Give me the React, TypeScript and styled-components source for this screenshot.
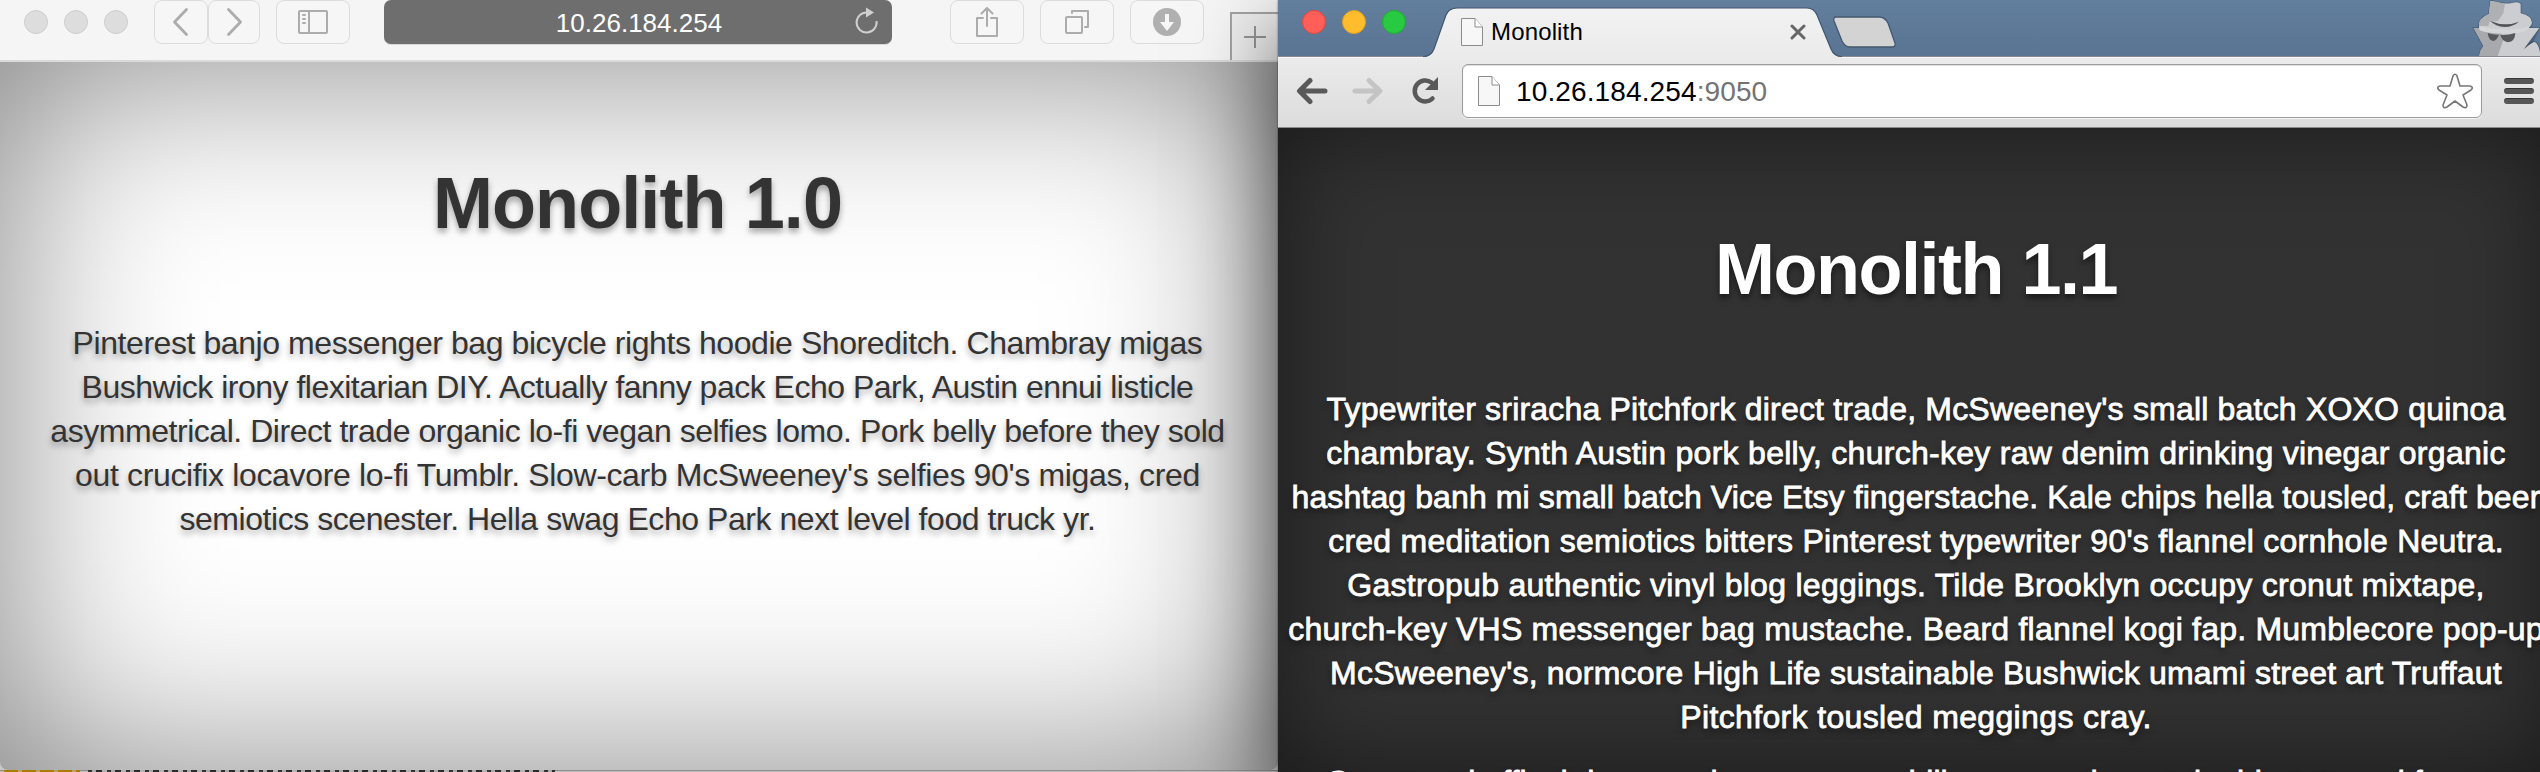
import React from "react";
import styled, { createGlobalStyle } from "styled-components";

const GlobalStyle = createGlobalStyle`
  * { box-sizing: border-box; }
  html, body { margin: 0; height: 772px; overflow: hidden; }
  body { font-family: "Liberation Sans", Arial, sans-serif; background: #c8c8c8; }
  svg { display: block; flex: none; }
`;

const Desktop = styled.main`
  display: flex;
  width: 2540px;
  height: 772px;
  overflow: hidden;
`;

const LeftSide = styled.div`
  display: flex;
  flex-direction: column;
  flex: none;
  width: 1278px;
`;

const SafariWindow = styled.section`
  display: flex;
  flex-direction: column;
  height: 770px;
  border-radius: 0 0 8px 8px;
  overflow: hidden;
`;

const SafariToolbar = styled.header`
  display: flex;
  align-items: flex-start;
  flex: none;
  height: 62px;
  padding-left: 24px;
  background: #f5f5f5;
  border-bottom: 2px solid #dadada;
`;

const Lights = styled.div`
  display: flex;
  gap: 16px;
  margin: 10px 26px 0 0;
`;

const Light = styled.i<{ $fill: string; $edge: string }>`
  width: 24px;
  height: 24px;
  border-radius: 50%;
  background: ${(p) => p.$fill};
  border: 1px solid ${(p) => p.$edge};
`;

const ToolButton = styled.button<{ $width?: number; $gap?: number }>`
  display: flex;
  align-items: center;
  justify-content: center;
  flex: none;
  width: ${(p) => p.$width ?? 74}px;
  height: 44px;
  margin: 0 ${(p) => p.$gap ?? 16}px 0 0;
  padding: 0;
  border: 1.5px solid #dcdcdc;
  border-radius: 8px;
  background: #f6f6f6;
`;

const SafariAddress = styled.div`
  display: flex;
  align-items: center;
  justify-content: center;
  position: relative;
  flex: none;
  width: 508px;
  height: 44px;
  margin-right: 58px;
  border-radius: 7px;
  background: #6e6e6e;
  box-shadow: 0 1px 0 #d8d8d8;
  color: #fff;
  font-size: 26px;
  line-height: 44px;
  padding: 2px 0 0 2px;
`;

const ReloadSlot = styled.span`
  position: absolute;
  right: 12px;
  top: 6px;
`;

const NewTabBox = styled.button`
  display: flex;
  align-items: center;
  justify-content: center;
  width: 48px;
  height: 48px;
  margin: 12px 0 0 10px;
  padding: 0;
  border: solid #a3a3a3;
  border-width: 2px 0 0 2px;
  background: #eeeeee;
`;

const Page = styled.article<{ $dark?: boolean }>`
  flex: 1;
  display: flex;
  flex-direction: column;
  align-items: center;
  padding: 101px ${(p) => (p.$dark ? 0 : 3)}px 0 0;
  overflow: hidden;
  color: ${(p) => (p.$dark ? "#fff" : "#333")};
  background: ${(p) => (p.$dark ? "#323232" : "#fff")};
  box-shadow: inset 0 0 ${(p) => (p.$dark ? 100 : 200)}px rgba(0, 0, 0, 0.5);
  text-shadow: 0 4px 6px rgba(0, 0, 0, ${(p) => (p.$dark ? 0.5 : 0.35)});
`;

const Title = styled.h1<{ $tracking: number }>`
  margin: 0 0 78px;
  font-size: 72px;
  line-height: 80px;
  letter-spacing: ${(p) => p.$tracking}px;
`;

const Paragraph = styled.p<{ $heavy?: boolean }>`
  display: flex;
  flex-direction: column;
  align-items: center;
  margin: 0 0 21px;
  font-size: 32px;
  line-height: 44px;
  -webkit-text-stroke: ${(p) => (p.$heavy ? "0.8px #fff" : "0")};
`;

const Line = styled.span<{ $tracking: number }>`
  white-space: nowrap;
  letter-spacing: ${(p) => p.$tracking}px;
`;

const PeekStrip = styled.div`
  display: flex;
  height: 2px;
  padding-left: 4px;
  gap: 8px;
  background: linear-gradient(#8f8f8f 50%, #bdbdbd 50%);
`;

const PeekMark = styled.i`
  width: 76px;
  background: repeating-linear-gradient(90deg, #a87d00 0 14px, #b5a36c 14px 18px);
`;

const PeekText = styled.i`
  width: 467px;
  background: repeating-linear-gradient(90deg, #333 0 4px, #a9a9a9 4px 8px, #2b2b2b 8px 14px, #b2b2b2 14px 19px);
`;

const ChromeWindow = styled.section`
  display: flex;
  flex-direction: column;
  position: relative;
  flex: none;
  width: 1276px;
  box-shadow: 0 0 2px rgba(0, 0, 0, 0.5), 0 30px 80px rgba(0, 0, 0, 0.6);
`;

const TabStrip = styled.div`
  display: flex;
  align-items: flex-start;
  flex: none;
  height: 56px;
  padding-left: 24px;
  background: linear-gradient(#637f9e, #5a7493);
`;

const Tab = styled.div`
  display: flex;
  align-items: flex-start;
  position: relative;
  z-index: 1;
  flex: none;
  width: 420px;
  height: 52px;
  margin: 6px 0 0 -9px;
  padding: 12px 38px 0 38px;
`;

const TabShape = styled.svg`
  position: absolute;
  inset: 0;
  z-index: -1;
`;

const TabName = styled.span`
  flex: 1;
  margin-left: 8px;
  font-size: 24px;
  line-height: 28px;
  letter-spacing: 0.15px;
  color: #000;
`;

const CloseMark = styled.svg`
  margin: 6px -1px 0 0;
`;

const NewTabShape = styled.svg`
  margin: 15px 0 0 -12px;
`;

const Incognito = styled.svg`
  margin: 0 14px 0 auto;
`;

const ChromeToolbar = styled.header`
  display: flex;
  align-items: flex-start;
  flex: none;
  height: 72px;
  padding: 7px 0 0 18px;
  border-top: 1px solid #8a8a92;
  border-bottom: 1px solid #8b8b8b;
  background: linear-gradient(#ebebeb, #dcdcdc);
  box-shadow: inset 0 1px 0 #f8f8f8;
`;

const NavIcon = styled.span<{ $gap: number }>`
  margin: 12px ${(p) => p.$gap}px 0 0;
`;

const Omnibox = styled.div`
  display: flex;
  align-items: flex-start;
  flex: none;
  width: 1020px;
  height: 54px;
  padding: 11px 8px 0 15px;
  border: 1px solid #9b9b9b;
  border-radius: 6px;
  background: #fff;
  box-shadow: inset 0 1px 1px #dcdcdc, 0 1px 0 #f4f4f4;
`;

const Url = styled.span`
  flex: 1;
  margin: 0 0 0 16px;
  font-size: 28px;
  line-height: 32px;
  letter-spacing: 0.12px;
  color: #000;
`;

const Port = styled.span`
  color: #737373;
`;

const Star = styled.svg`
  margin-top: -3px;
`;

const MenuBars = styled.span`
  display: flex;
  flex-direction: column;
  gap: 4px;
  margin: 14px 0 0 22px;
`;

const MenuBar = styled.i`
  width: 30px;
  height: 6px;
  border-radius: 3px;
  background: #575757;
  border-top: 1px solid #383838;
`;

const stroke = { fill: "none", stroke: "#acacac", strokeLinecap: "round", strokeLinejoin: "round" } as const;

const Chevron = ({ forward }: { forward?: boolean }) => (
  <svg width="18" height="30" viewBox="0 0 18 30" {...stroke} strokeWidth="2.800">
    <path d={forward ? "M3.500 2.500L15.500 15L3.500 27.500" : "M14.500 2.500L2.500 15L14.500 27.500"} />
  </svg>
);

const FileIcon = ({ height }: { height: number }) => (
  <svg width="22" height={height} viewBox={`0 0 22 ${height}`} fill="#f7f7f7" stroke="#8c8c8c">
    <path d={`M.5 .5H14L21.500 9V${height - 0.5}H.5Z`} />
    <path d="M14 .5V9H21.500" fill="#fff" />
  </svg>
);

const Arrow = ({ forward }: { forward?: boolean }) => (
  <svg width="34" height="30" viewBox="0 0 34 30" fill="none" stroke={forward ? "#c4c4c4" : "#595959"} strokeWidth="5" strokeLinecap="round" strokeLinejoin="round">
    <path d={forward ? "M4 15H28M18 4.500L29 15L18 25.500" : "M29 15H5M14 4.500L3.500 15L14 25.500"} />
  </svg>
);

type TextLine = [string, number];

const lightLines: TextLine[] = [
  ["Pinterest banjo messenger bag bicycle rights hoodie Shoreditch. Chambray migas", -0.43],
  ["Bushwick irony flexitarian DIY. Actually fanny pack Echo Park, Austin ennui listicle", -0.5],
  ["asymmetrical. Direct trade organic lo-fi vegan selfies lomo. Pork belly before they sold", -0.46],
  ["out crucifix locavore lo-fi Tumblr. Slow-carb McSweeney's selfies 90's migas, cred", -0.355],
  ["semiotics scenester. Hella swag Echo Park next level food truck yr.", -0.45],
];

const darkLines: TextLine[] = [
  ["Typewriter sriracha Pitchfork direct trade, McSweeney's small batch XOXO quinoa", 0.19],
  ["chambray. Synth Austin pork belly, church-key raw denim drinking vinegar organic", 0.285],
  ["hashtag banh mi small batch Vice Etsy fingerstache. Kale chips hella tousled, craft beer", 0.11],
  ["cred meditation semiotics bitters Pinterest typewriter 90's flannel cornhole Neutra.", 0.245],
  ["Gastropub authentic vinyl blog leggings. Tilde Brooklyn occupy cronut mixtape,", 0.285],
  ["church-key VHS messenger bag mustache. Beard flannel kogi fap. Mumblecore pop-up", 0.22],
  ["McSweeney's, normcore High Life sustainable Bushwick umami street art Truffaut", 0.2],
  ["Pitchfork tousled meggings cray.", 0.36],
];

const nextLines: TextLine[] = [
  ["Street art keffiyeh hammock raw vegan chillwave synth sustainable tattooed forage", 0.05],
];

const Lines = ({ lines }: { lines: TextLine[] }) => (
  <>
    {lines.map(([text, tracking]) => (
      <Line key={text} $tracking={tracking}>{text}</Line>
    ))}
  </>
);

const Safari = () => (
  <SafariWindow>
    <SafariToolbar>
      <Lights>
        {[0, 1, 2].map((n) => <Light key={n} $fill="#dddddd" $edge="#cdcdcd" />)}
      </Lights>
      <ToolButton $width={54} $gap={0}><Chevron /></ToolButton>
      <ToolButton $width={52}><Chevron forward /></ToolButton>
      <ToolButton $gap={34}>
        <svg width="30" height="24" viewBox="0 0 30 24" {...stroke} strokeWidth="2">
          <rect x="1" y="1" width="28" height="22" rx="1" />
          <path d="M11 1V23M5 5H7M5 9H7M5 13H7" />
        </svg>
      </ToolButton>
      <SafariAddress>
        10.26.184.254
        <ReloadSlot>
          <svg width="28" height="30" viewBox="0 0 28 30" fill="none" stroke="#cfcfcf" strokeWidth="2">
            <path d="M15 6.500A10 10 0 1 0 24.500 15" />
            <path d="M14 1.500V11.500L22 6.500Z" fill="#cfcfcf" stroke="none" />
          </svg>
        </ReloadSlot>
      </SafariAddress>
      <ToolButton>
        <svg width="24" height="32" viewBox="0 0 24 32" {...stroke} strokeWidth="2">
          <path d="M8 12H2V30H22V12H16M12 20V2M6.500 7.500L12 2L17.500 7.500" />
        </svg>
      </ToolButton>
      <ToolButton>
        <svg width="26" height="26" viewBox="0 0 26 26" {...stroke} strokeWidth="2">
          <rect x="2" y="8" width="16" height="16" rx="1" />
          <path d="M8 4V2H24V18H21" />
        </svg>
      </ToolButton>
      <ToolButton>
        <svg width="28" height="28" viewBox="0 0 28 28">
          <circle cx="14" cy="14" r="14" fill="#b0b0b0" />
          <path d="M12 6H16V14H21L14 23L7 14H12Z" fill="#f6f6f6" />
        </svg>
      </ToolButton>
      <NewTabBox>
        <svg width="22" height="22" viewBox="0 0 22 22" stroke="#969696" strokeWidth="2">
          <path d="M11 0V22M0 11H22" />
        </svg>
      </NewTabBox>
    </SafariToolbar>
    <Page>
      <Title $tracking={-0.9}>Monolith 1.0</Title>
      <Paragraph><Lines lines={lightLines} /></Paragraph>
    </Page>
  </SafariWindow>
);

const Spy = () => (
  <Incognito width="72" height="56" viewBox="84 0 216 168">
    <path d="M151 4Q155 1 165 5Q195 14 215 9Q237 4 242 12V40Q276 48 276 68Q275 78 270 84H298L270 138Q282 122 288 128Q297 137 300 158V168H118Q120 150 131 139L101 84H117Q113 55 147 42Z" fill="#3c5169" opacity=".6" stroke="#3c5169" strokeWidth="5" />
    <path d="M151 4Q155 1 165 5Q195 14 215 9Q237 4 242 12V40Q276 48 276 68Q275 78 262 84H298L252 146Q278 119 288 128Q297 137 300 158V168H118Q120 150 131 139L101 84H117Q113 55 147 42Z" fill="#cbcdd0" />
    <path d="M151 4Q160 2 195 11L190 40L174 63Q155 63 148 66L145 78H117Q113 55 147 42Z" fill="#aeb0b4" />
    <path d="M101 84H118Q138 97 186 98L190 120L173 168H118Q120 150 131 139Z" fill="#a7a9ac" />
    <path d="M118 78Q150 88 192 88Q240 90 270 78L262 90Q230 104 190 101Q135 100 118 90Z" fill="#d4d6d8" />
    <path d="M151 63Q195 82 237 65Q220 80 194 81Q166 80 151 63Z" fill="#515356" />
    <path d="M143 99Q160 105 177 104Q170 122 160 123Q145 120 143 99ZM181 105Q205 106 226 99Q225 125 204 127Q187 125 181 105Z" fill="#58595c" />
    <path d="M252 147Q268 126 284 124L268 134Z" fill="#3f4246" />
  </Incognito>
);

const Chrome = () => (
  <ChromeWindow>
    <TabStrip>
      <Lights>
        <Light $fill="#ff5f57" $edge="#e14640" />
        <Light $fill="#ffbd2e" $edge="#dfa023" />
        <Light $fill="#28ca41" $edge="#1dac2b" />
      </Lights>
      <Tab>
        <TabShape width="420" height="52" viewBox="0 0 420 52">
          <defs>
            <linearGradient id="tabFill" x2="0" y2="1">
              <stop stopColor="#f2f2f2" />
              <stop offset="1" stopColor="#ebebeb" />
            </linearGradient>
          </defs>
          <path d="M0 51Q8 51 11 43L23 9Q26 2 34 2H384Q391 2 394 9L408 43Q411 51 419 51V52H0Z" fill="url(#tabFill)" />
          <path d="M0 50.500Q8 50.500 11 43L23 9Q26 2 34 2H384Q391 2 394 9L408 43Q411 50.500 419 50.500" fill="none" stroke="#41576f" strokeWidth="1.200" />
        </TabShape>
        <FileIcon height={28} />
        <TabName>Monolith</TabName>
        <CloseMark width="16" height="16" viewBox="0 0 16 16" stroke="#666" strokeWidth="3" strokeLinecap="round">
          <path d="M2 2L14 14M14 2L2 14" />
        </CloseMark>
      </Tab>
      <NewTabShape width="66" height="34" viewBox="0 0 66 34">
        <path d="M5 2H48Q54 2 57 8L64 28Q65 32 61 32H19Q14 32 11 26L3 6Q2 2 5 2Z" fill="#d3d3d3" stroke="#43586f" strokeWidth="1.300" />
      </NewTabShape>
      <Spy />
    </TabStrip>
    <ChromeToolbar>
      <NavIcon $gap={21}><Arrow /></NavIcon>
      <NavIcon $gap={25}><Arrow forward /></NavIcon>
      <NavIcon $gap={22}>
        <svg width="30" height="30" viewBox="0 0 30 30" fill="none" stroke="#595959" strokeWidth="4.500" strokeLinecap="round">
          <path d="M22.500 22.500A10.500 10.500 0 1 1 21.500 6.500" />
          <path d="M28 1V14H15Z" fill="#595959" stroke="none" />
        </svg>
      </NavIcon>
      <Omnibox>
        <FileIcon height={30} />
        <Url>10.26.184.254<Port>:9050</Port></Url>
        <Star width="36" height="36" viewBox="0 0 36 36" fill="#fff" stroke="#777" strokeWidth="1.600" strokeLinejoin="round">
          <path d="M16 3Q18 -.5 20 3L23 13H33Q37 14 34 17L26 22L30 32Q30 36 26 34L18 28L10 34Q6 36 6 32L10 22L2 17Q-1 14 3 13H13Z" />
        </Star>
      </Omnibox>
      <MenuBars><MenuBar /><MenuBar /><MenuBar /></MenuBars>
    </ChromeToolbar>
    <Page $dark>
      <Title $tracking={-1.5}>Monolith 1.1</Title>
      <Paragraph $heavy><Lines lines={darkLines} /></Paragraph>
      <Paragraph $heavy><Lines lines={nextLines} /></Paragraph>
    </Page>
  </ChromeWindow>
);

export default function App() {
  return (
    <>
      <GlobalStyle />
      <Desktop>
        <LeftSide>
          <Safari />
          <PeekStrip><PeekMark /><PeekText /></PeekStrip>
        </LeftSide>
        <Chrome />
      </Desktop>
    </>
  );
}
